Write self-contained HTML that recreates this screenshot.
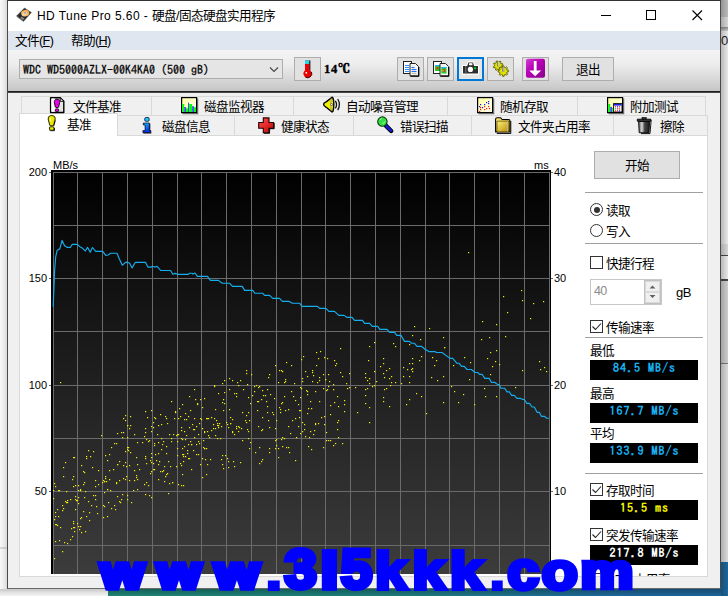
<!DOCTYPE html>
<html><head><meta charset="utf-8"><title>HD Tune Pro</title>
<style>
html,body{margin:0;padding:0}
body{width:728px;height:596px;overflow:hidden;position:relative;background:#f2f2f2;font-family:"Liberation Sans","Noto Sans CJK SC",sans-serif;font-size:12px;color:#000}
.a{position:absolute}
.t{position:absolute;white-space:nowrap;line-height:16px;height:16px;font-size:12.6px;letter-spacing:-0.6px}
.tab{position:absolute;box-sizing:border-box;border:1px solid #d9d9d9;background:#f0f0f0}
.btn{position:absolute;box-sizing:border-box;border:1px solid #adadad;background:#e1e1e1}
.sep{position:absolute;left:585px;width:118px;height:1px;background:#a0a0a0}
.cb{position:absolute;left:590px;width:13px;height:13px;box-sizing:border-box;border:1px solid #333;background:#fff}
.bx{position:absolute;left:590px;width:108px;height:20px;background:#000;font-family:IPAGothic,"Liberation Mono",monospace;font-weight:bold;font-size:12px;text-align:center;line-height:15px;letter-spacing:1px;text-indent:1px;white-space:nowrap}
.ax{position:absolute;font-size:11px;line-height:12px;height:12px;white-space:nowrap;color:#000}
</style></head><body>

<!-- surroundings -->
<div class="a" style="left:0;top:0;width:8px;height:596px;background:linear-gradient(90deg,#f8f8f8,#ececec 45%,#d4d4d4)"></div>
<div class="a" style="left:0;top:547px;width:8px;height:2px;background:linear-gradient(90deg,#d8d8d8,#c4c4c4)"></div>
<div class="a" style="left:721px;top:0;width:7px;height:17px;background:#c4c4c4"></div>
<div class="a" style="left:721px;top:17px;width:7px;height:10px;background:#e0e0e0"></div>
<div class="a" style="left:721px;top:27px;width:7px;height:4px;background:linear-gradient(#909090,#d8d8d8)"></div>
<div class="a" style="left:721px;top:31px;width:7px;height:213px;background:#f4f4f4"></div>
<div class="a" style="left:721px;top:244px;width:7px;height:11px;background:#e2e2e2"></div>
<div class="a" style="left:721px;top:255px;width:7px;height:1px;background:#4a4a4a"></div>
<div class="a" style="left:721px;top:256px;width:7px;height:23px;background:#f4f4f4"></div>
<div class="a" style="left:721px;top:279px;width:7px;height:2px;background:#4a4a4a"></div>
<div class="a" style="left:721px;top:281px;width:7px;height:82px;background:#d8d8d8"></div>
<div class="a" style="left:721px;top:363px;width:7px;height:1px;background:#808080"></div>
<div class="a" style="left:721px;top:364px;width:7px;height:198px;background:#e6e6e6"></div>
<div class="a" style="left:721px;top:33px;width:7px;height:16px;overflow:hidden;font-size:13px;line-height:16px;color:#222;white-space:nowrap">07</div>
<div class="a" style="left:721px;top:562px;width:7px;height:34px;background:#1e6aa0"></div>
<div class="a" style="left:721px;top:0;width:7px;height:596px;background:linear-gradient(90deg,rgba(0,0,0,.24),rgba(0,0,0,.05))"></div>
<div class="a" style="left:0;top:589px;width:108px;height:7px;background:linear-gradient(#c8c8c8,#e6e6e6 60%,#f2f2f2)"></div>
<div class="a" style="left:108px;top:589px;width:613px;height:7px;background:linear-gradient(90deg,#1f8a78,#1e8280 45%,#1e6aa0 85%)"></div>
<div class="a" style="left:108px;top:589px;width:613px;height:7px;background:linear-gradient(rgba(0,0,0,.3),rgba(0,0,0,.04))"></div>
<div class="a" style="left:108px;top:588px;width:620px;height:2px;background:linear-gradient(90deg,#f4f4f4 0,#f4f4f4 0%,#1c5f95 100%);display:none"></div>

<!-- window -->
<div class="a" style="left:7px;top:0;width:714px;height:589px;background:#f0f0f0;box-sizing:border-box;border:1px solid #4a4a4a;border-top-color:#333;border-bottom-color:#6a6a6a"></div>
<!-- title bar -->
<div class="a" style="left:8px;top:1px;width:712px;height:30px;background:#fff"></div>
<svg class="a" style="left:14px;top:5px" width="22" height="20" viewBox="14 5 22 20">
 <polygon points="24.5,8 31.4,12.6 23.6,21.2 16.6,16" fill="#2a2a2c" stroke="#555" stroke-width="0.6"/>
 <polygon points="16.6,16 23.6,21.2 23.6,22 16.6,16.8" fill="#777"/>
 <defs><radialGradient id="dg" cx=".35" cy=".6" r=".7"><stop offset="0" stop-color="#fde0a8"/><stop offset="1" stop-color="#eda040"/></radialGradient></defs><ellipse cx="25.2" cy="13.2" rx="4.1" ry="3.2" fill="url(#dg)" transform="rotate(-15 25.2 13.2)"/>
 <ellipse cx="25" cy="12.8" rx="1.3" ry="1.1" fill="#a8b0c0"/>
 <polygon points="21.5,16.5 24.5,18.5 23,20 20.3,18" fill="#8a8a8a"/>
</svg>
<div class="t" style="left:37px;top:8px" id="title"><span id="tl" style="font-size:12px;letter-spacing:0.44px">HD Tune Pro 5.60 - </span><span id="tc">硬盘/固态硬盘实用程序</span></div>
<svg class="a" style="left:595px;top:5px" width="115" height="22" viewBox="595 5 115 22" fill="none" stroke="#000" stroke-width="1">
 <line x1="601" y1="15.5" x2="611" y2="15.5"/>
 <rect x="646.5" y="10.5" width="9" height="9"/>
 <path d="M692.5 10.5l9.5 9.5M702 10.5l-9.5 9.5" stroke-width="1.1"/>
</svg>
<!-- menu bar -->
<div class="a" style="left:8px;top:31px;width:712px;height:19px;background:#dfe6f0"></div>
<div class="t" style="left:15px;top:33px" id="m1">文件(<u>F</u>)</div>
<div class="t" style="left:71px;top:33px" id="m2">帮助(<u>H</u>)</div>
<!-- toolbar -->
<div class="a" style="left:8px;top:50px;width:712px;height:41px;background:linear-gradient(#f4f4f4,#ededed 35%,#c6c6c6)"></div>
<div class="a" style="left:8px;top:91px;width:712px;height:2px;background:linear-gradient(#1e1e1e,#1e1e1e 60%,#8a8a8a)"></div>
<div class="btn" style="left:19px;top:59px;width:264px;height:20px;background:#e5e5e5"></div>
<div class="t" style="left:23px;top:61px;font-family:IPAGothic,'Liberation Mono',monospace;font-size:12px;letter-spacing:0;-webkit-text-stroke:0.25px #000" id="combo">WDC WD5000AZLX-00K4KA0 (500 gB)</div>
<svg class="a" style="left:268px;top:65px" width="12" height="9" viewBox="268 65 12 9"><path d="M270 67.5l4 4 4-4" fill="none" stroke="#444" stroke-width="1.1"/></svg>
<div class="btn" style="left:294px;top:57px;width:27px;height:24px"></div>
<svg class="a" style="left:300px;top:59px" width="16" height="20" viewBox="300 59 16 20">
 <rect x="305" y="60.3" width="4.6" height="12" fill="#f00000"/>
 <rect x="305" y="60.3" width="4.6" height="3.6" fill="#20e0f0"/>
 <rect x="309.2" y="60.5" width="1.2" height="10" fill="#222"/>
 <circle cx="307.6" cy="73.6" r="4.2" fill="#e80000"/>
 <path d="M311.5 72a4.2 4.2 0 0 1-6 5.2" fill="none" stroke="#400" stroke-width="1"/>
 <rect x="305.5" y="72" width="1.6" height="1.6" fill="#fff"/>
</svg>
<div class="t" style="left:324px;top:61px;font-family:'Liberation Serif','Noto Serif CJK SC',serif;font-weight:bold;font-size:12.5px;letter-spacing:0.7px;-webkit-text-stroke:0.35px #000" id="temp">14<span style="letter-spacing:0;-webkit-text-stroke:0.7px #000;font-size:12px">℃</span></div>

<div class="btn" style="left:397px;top:57px;width:27px;height:24px"></div>
<svg class="a" style="left:400px;top:59px" width="22" height="20" viewBox="400 59 22 20">
 <rect x="403.5" y="61.5" width="8" height="12" fill="#fff" stroke="#222"/>
 <g stroke="#1e90ff" stroke-width="1"><line x1="405" y1="65.5" x2="409" y2="65.5"/><line x1="405" y1="67.5" x2="409" y2="67.5"/><line x1="405" y1="69.5" x2="409" y2="69.5"/><line x1="405" y1="71.5" x2="409" y2="71.5"/></g>
 <path d="M410 63.5h5.5l3 3v9.3h-8.5z" fill="#f4f4f4" stroke="#222"/>
 <path d="M418.9 67v9.3h-8.5" fill="none" stroke="#000" stroke-width="1"/>
 <g stroke="#1e70ff" stroke-width="1.1"><line x1="411.5" y1="67.5" x2="414.5" y2="67.5"/><line x1="411.5" y1="69.5" x2="416.5" y2="69.5"/><line x1="411.5" y1="71.5" x2="416.5" y2="71.5"/><line x1="411.5" y1="73.5" x2="416.5" y2="73.5" stroke="#c8b8a0"/></g>
</svg>
<div class="btn" style="left:427px;top:57px;width:27px;height:24px"></div>
<svg class="a" style="left:430px;top:59px" width="22" height="20" viewBox="430 59 22 20">
 <rect x="433.5" y="61.5" width="8" height="12" fill="#fff" stroke="#222"/>
 <rect x="435" y="65" width="5" height="6" fill="#20d020"/><rect x="435" y="65" width="5" height="1.2" fill="#20b0ff"/><rect x="436.5" y="67" width="2" height="2.5" fill="#f03010"/>
 <path d="M440 63.5h5.5l3 3v9.3h-8.5z" fill="#f4f4f4" stroke="#222"/>
 <path d="M448.9 67v9.3h-8.5" fill="none" stroke="#000" stroke-width="1"/>
 <rect x="441.3" y="67" width="5.2" height="6.5" fill="#20d020"/><rect x="441.3" y="67" width="5.2" height="1.2" fill="#20b0ff"/><rect x="443" y="69" width="2" height="3" fill="#f03010"/><rect x="442.5" y="70" width="1.2" height="1.2" fill="#f0e000"/>
</svg>
<div class="btn" style="left:457px;top:57px;width:27px;height:24px;border:2px solid #0078d7;background:#e5e5e5"></div>
<svg class="a" style="left:460px;top:59px" width="22" height="20" viewBox="460 59 22 20">
 <path d="M463 66h4.2l1.2-3.6h4.6l1.2 3.6h3.8v7.6h-15z" fill="#fff" stroke="#fff" stroke-width="2.2" stroke-linejoin="round"/>
 <path d="M463 66h4.2l1.2-3.6h4.6l1.2 3.6h3.8v7.6h-15z" fill="#2e2e2e"/>
 <rect x="465" y="66" width="1.3" height="7.6" fill="#666"/>
 <rect x="469" y="63.2" width="3.4" height="2" fill="#fff"/>
 <circle cx="470.4" cy="69.4" r="2.6" fill="#fff"/>
 <rect x="474.2" y="67.3" width="1.9" height="1.9" fill="#00e020"/>
</svg>
<div class="btn" style="left:487px;top:57px;width:27px;height:24px"></div>
<svg class="a" style="left:490px;top:59px" width="22" height="20" viewBox="490 59 22 20">
 <g fill="#e2e200" stroke="#5a5a00" stroke-width="0.9" stroke-linejoin="round">
 <path d="M501.63 66.40L502.82 67.34L502.26 68.44L500.80 68.04L500.13 68.62L500.30 70.12L499.14 70.51L498.38 69.20L497.50 69.13L496.56 70.32L495.46 69.76L495.86 68.30L495.28 67.63L493.78 67.80L493.39 66.64L494.70 65.88L494.77 65.00L493.58 64.06L494.14 62.96L495.60 63.36L496.27 62.78L496.10 61.28L497.26 60.89L498.02 62.20L498.90 62.27L499.84 61.08L500.94 61.64L500.54 63.10L501.12 63.77L502.62 63.60L503.01 64.76L501.70 65.52z"/>
 <path d="M506.63 72.92L507.55 74.27L506.62 75.23L505.24 74.37L504.37 74.75L504.06 76.35L502.73 76.37L502.36 74.78L501.48 74.43L500.13 75.35L499.17 74.42L500.03 73.04L499.65 72.17L498.05 71.86L498.03 70.53L499.62 70.16L499.97 69.28L499.05 67.93L499.98 66.97L501.36 67.83L502.23 67.45L502.54 65.85L503.87 65.83L504.24 67.42L505.12 67.77L506.47 66.85L507.43 67.78L506.57 69.16L506.95 70.03L508.55 70.34L508.57 71.67L506.98 72.04z"/>
 </g>
 <rect x="497.300" y="61.800" width="1.800" height="4.600" fill="#667"/><rect x="498.200" y="61.800" width=".9" height="4.600" fill="#dde"/>
 <rect x="502.400" y="67" width="1.900" height="4.800" fill="#667"/><rect x="503.400" y="67" width=".9" height="4.800" fill="#dde"/>
</svg>
<div class="btn" style="left:522px;top:57px;width:27px;height:24px"></div>
<svg class="a" style="left:525px;top:58px" width="22" height="22" viewBox="525 58 22 22">
 <defs><linearGradient id="mg" x1="0" y1="0" x2="1" y2="1"><stop offset="0" stop-color="#d040d0"/><stop offset=".4" stop-color="#b800b8"/><stop offset="1" stop-color="#8a008a"/></linearGradient></defs>
 <rect x="526" y="58.8" width="19" height="19" rx="2" fill="url(#mg)"/>
 <path d="M533.8 61h2.8v9.4h4.6l-6 5.8-6-5.8h4.6z" fill="#fff"/>
</svg>
<div class="btn" style="left:562px;top:57px;width:52px;height:24px"></div>
<div class="t" style="left:576px;top:62px" id="exit">退出</div>

<!-- tabs row 1 -->
<div class="tab" style="left:21px;top:96px;width:131px;height:20px"></div>
<div class="tab" style="left:151px;top:96px;width:143px;height:20px"></div>
<div class="tab" style="left:293px;top:96px;width:155px;height:20px"></div>
<div class="tab" style="left:447px;top:96px;width:131px;height:20px"></div>
<div class="tab" style="left:577px;top:96px;width:129px;height:20px"></div>
<!-- tabs row 2 -->
<div class="tab" style="left:116px;top:115px;width:119px;height:21px"></div>
<div class="tab" style="left:234px;top:115px;width:120px;height:21px"></div>
<div class="tab" style="left:353px;top:115px;width:119px;height:21px"></div>
<div class="tab" style="left:471px;top:115px;width:143px;height:21px"></div>
<div class="tab" style="left:613px;top:115px;width:95px;height:21px"></div>
<!-- tab page -->
<div class="a" style="left:19px;top:135px;width:689px;height:442px;background:#fff;box-sizing:border-box;border:1px solid #d9d9d9"></div>
<div class="a" style="left:19px;top:113px;width:99px;height:23px;background:#fff;box-sizing:border-box;border:1px solid #d9d9d9;border-bottom:none"></div>

<div class="t" style="left:73px;top:99px" id="r1a">文件基准</div>
<div class="t" style="left:204px;top:99px" id="r1b">磁盘监视器</div>
<div class="t" style="left:346px;top:99px" id="r1c">自动噪音管理</div>
<div class="t" style="left:500px;top:99px" id="r1d">随机存取</div>
<div class="t" style="left:630px;top:99px" id="r1e">附加测试</div>
<div class="t" style="left:67px;top:117px" id="r2a">基准</div>
<div class="t" style="left:162px;top:119px" id="r2b">磁盘信息</div>
<div class="t" style="left:281px;top:119px" id="r2c">健康状态</div>
<div class="t" style="left:400px;top:119px" id="r2d">错误扫描</div>
<div class="t" style="left:518px;top:119px" id="r2e">文件夹占用率</div>
<div class="t" style="left:660px;top:119px" id="r2f">擦除</div>

<!-- tab icons -->
<svg class="a" style="left:40px;top:94px" width="680" height="42" viewBox="40 94 680 42">
 <defs>
  <linearGradient id="cr" x1="0" y1="0" x2="1" y2="1"><stop offset="0" stop-color="#ffffa0"/><stop offset="1" stop-color="#fffff4"/></linearGradient>
  <linearGradient id="fo" x1="0" y1="0" x2="1" y2="1"><stop offset="0" stop-color="#fff27a"/><stop offset="1" stop-color="#b88a00"/></linearGradient>
  <linearGradient id="tr" x1="0" y1="0" x2="1" y2="0"><stop offset="0" stop-color="#555"/><stop offset=".3" stop-color="#d8d8d8"/><stop offset=".55" stop-color="#444"/><stop offset="1" stop-color="#1a1a1a"/></linearGradient>
  <linearGradient id="bi" x1="0" y1="0" x2="0" y2="1"><stop offset="0" stop-color="#10a8ff"/><stop offset="1" stop-color="#0020f0"/></linearGradient>
  <linearGradient id="rc" x1="0" y1="0" x2="1" y2="1"><stop offset="0" stop-color="#ff5050"/><stop offset="1" stop-color="#c00000"/></linearGradient>
 </defs>
 <!-- file benchmark -->
 <path d="M50.6 97.700h9.600l3.600 3.600v11.200h-13.200z" fill="#e4e4e4" stroke="#000" stroke-width="1.400" stroke-linejoin="round"/>
 <rect x="51.400" y="98.500" width="3.200" height="13.200" fill="#fff"/>
 <path d="M60.200 97.700v3.600h3.600z" fill="#fff" stroke="#000" stroke-width=".9"/>
 <path d="M57 99.200c2.300 0 2.900 1.700 2.600 3.400l-1 4.400c-.3 1.100-2.900 1.100-3.200 0l-1-4.400c-.3-1.700.3-3.400 2.600-3.400z" fill="#e800e8" stroke="#1a001a" stroke-width="1"/>
 <rect x="55.300" y="109" width="3.400" height="2.500" rx="1" fill="#e800e8" stroke="#1a001a" stroke-width=".9"/>
 <!-- monitor -->
 <rect x="181.600" y="97.600" width="15" height="15" fill="url(#cr)" stroke="#000" stroke-width="1.200"/>
 <rect x="197.200" y="98.500" width="1" height="15" fill="#555"/><rect x="182.500" y="113.200" width="15.700" height="1" fill="#555"/>
 <g><rect x="182.200" y="104" width="2" height="8" fill="#0f0"/><rect x="184.200" y="107" width="1.900" height="5" fill="#4848ff"/><rect x="186.100" y="108.300" width="1.900" height="3.700" fill="#0f0"/><rect x="188" y="102.700" width="1.100" height="9.300" fill="#4848ff"/><rect x="189.100" y="104" width="3" height="8" fill="#0f0"/><rect x="192.100" y="106.200" width="1.900" height="5.800" fill="#4848ff"/><rect x="194" y="107.200" width="2" height="4.800" fill="#0f0"/></g>
 <!-- speaker -->
 <path d="M323.600 104.300c0-1.600 1.500-1.900 2.600-2.400l6-4.700c.8 0 1.600 3.500 1.600 7.400s-.8 7.400-1.600 7.400l-6-4.700c-1.100-.5-2.600-1.400-2.600-3z" fill="#f0f000" stroke="#000" stroke-width="1.400"/>
 <path d="M331 98.500v12" stroke="#888" stroke-width=".8"/>
 <circle cx="331.600" cy="104.500" r="1" fill="#fff" stroke="#333" stroke-width=".6"/>
 <path d="M335.400 100.800c1.300 2.200 1.300 5.400 0 7.600M337.700 99c2.200 3.200 2.200 8 0 11.200" fill="none" stroke="#111" stroke-width="1.300"/>
 <!-- random -->
 <rect x="477.600" y="97.600" width="15" height="15" fill="url(#cr)" stroke="#000" stroke-width="1.200"/>
 <rect x="493.200" y="98.500" width="1" height="15" fill="#555"/><rect x="478.500" y="113.200" width="15.700" height="1" fill="#555"/>
 <g fill="#1010ff"><rect x="480" y="104" width="1.200" height="1.200"/><rect x="479" y="106" width="1.200" height="1.200"/><rect x="482" y="107" width="1.200" height="1.200"/><rect x="484" y="104" width="1.200" height="1.200"/><rect x="486" y="102" width="1.200" height="1.200"/><rect x="488" y="101" width="1.200" height="1.200"/><rect x="488" y="103" width="1.200" height="1.200"/></g>
 <g fill="#ff1010"><rect x="479" y="111" width="1.200" height="1.200"/><rect x="480" y="109" width="1.200" height="1.200"/><rect x="480" y="107" width="1.200" height="1.200"/><rect x="484" y="109" width="1.200" height="1.200"/><rect x="484" y="106" width="1.200" height="1.200"/><rect x="486" y="108" width="1.200" height="1.200"/><rect x="488" y="106" width="1.200" height="1.200"/><rect x="489" y="108" width="1.200" height="1.200"/></g>
 <!-- extra -->
 <rect x="607.600" y="97.600" width="15" height="15" fill="url(#cr)" stroke="#000" stroke-width="1.200"/>
 <rect x="623.200" y="98.500" width="1" height="15" fill="#555"/><rect x="608.500" y="113.200" width="15.700" height="1" fill="#555"/>
 <rect x="608.200" y="104" width="2" height="8" fill="#0f0"/><rect x="610.200" y="107" width="2" height="5" fill="#4848ff"/><rect x="612.200" y="108" width="1" height="4" fill="#0f0"/>
 <rect x="613.600" y="103.600" width="8.400" height="8.400" fill="#fff" stroke="#000" stroke-width=".9"/>
 <rect x="614" y="104" width="7.600" height="1.600" fill="#2020e0"/>
 <g fill="#f00"><rect x="615" y="106.300" width="1.100" height="1.100"/><rect x="619" y="106.300" width="1.100" height="1.100"/><rect x="617" y="108.300" width="1.100" height="1.100"/><rect x="615" y="110.300" width="1.100" height="1.100"/><rect x="617" y="110.300" width="1.100" height="1.100"/></g>
 <g fill="#00f"><rect x="617" y="106.300" width="1.100" height="1.100"/><rect x="619" y="110.300" width="1.100" height="1.100"/></g><rect x="615" y="108.300" width="1.100" height="1.100" fill="#0c0"/><rect x="619" y="108.300" width="1.100" height="1.100" fill="#f00"/>
 <!-- benchmark (yellow !) -->
 <path d="M51.700 115.500c2.900 0 3.700 2 3.400 4.200l-1.400 5.200c-.4 1.300-3.600 1.300-4 0l-1.400-5.200c-.3-2.200.5-4.200 3.400-4.200z" fill="#e8e800" stroke="#3a3a00" stroke-width="1.100"/>
 <rect x="49.500" y="126.800" width="4.500" height="3.500" rx="1.300" fill="#e8e800" stroke="#3a3a00" stroke-width="1.100"/>
 <path d="M55.300 120.500l-1.500 5.300M54.500 128v2.700h-4" stroke="#111" stroke-width=".9" fill="none"/>
 <path d="M50.300 117.500v4" stroke="#ffffa0" stroke-width="1"/>
 <!-- info -->
 <rect x="144.700" y="117.500" width="4.500" height="3.800" rx="1.200" fill="#20c0ff" stroke="#002" stroke-width=".7"/>
 <path d="M143.300 123h6v7.600h1.600v2h-8v-2h2.200v-5.600h-1.800z" fill="url(#bi)" stroke="#001" stroke-width=".7"/>
 <path d="M149.800 123.500v7M143.300 133h8" stroke="#000" stroke-width=".9"/>
 <!-- health -->
 <path d="M263.300 117.900h5.700v4.600h4.600v5.700h-4.600v4.600h-5.700v-4.600h-4.600v-5.700h4.600z" fill="url(#rc)" stroke="#200" stroke-width="1.100"/>
 <path d="M269.600 133.300h-5.700M274.200 123v5.700h-4.600v4.600" fill="none" stroke="#000" stroke-width=".9"/>
 <!-- magnifier -->
 <path d="M385.600 125.400l5.600 5.600" stroke="#000" stroke-width="4.400" stroke-linecap="round"/>
 <path d="M385.400 125l5.400 5.400" stroke="#1818d0" stroke-width="2.800" stroke-linecap="round"/>
 <circle cx="382.400" cy="121.600" r="4.700" fill="#38e048" stroke="#0a3a0a" stroke-width="1.100"/>
 <path d="M380 119.600l1.600-1.400M382.600 124l2.400-2.400" stroke="#c8ffc8" stroke-width=".9"/>
 <!-- folder -->
 <path d="M495.600 119.300c0-1 .6-1.600 1.600-1.600h3.400l1.600 1.800h6.400c1 0 1.400.6 1.400 1.400v11h-14.400z" fill="url(#fo)" stroke="#000" stroke-width="1.100"/>
 <path d="M497 121.200h12v10.700h-12z" fill="url(#fo)" stroke="#3a2a00" stroke-width=".6"/>
 <rect x="507.200" y="121.500" width=".8" height="10" fill="#bbb"/>
 <path d="M510.800 121v12.500h-14" stroke="#000" stroke-width=".9" fill="none"/>
 <!-- trash -->
 <path d="M638.600 121.500h11l-.6 11.200h-9.800z" fill="url(#tr)" stroke="#000" stroke-width=".9"/>
 <path d="M637.300 119.200h13.600v2h-13.600z" fill="#444" stroke="#000" stroke-width=".9"/>
 <rect x="642" y="117.500" width="4.200" height="1.600" fill="#333" stroke="#000" stroke-width=".6"/>
 <path d="M651 120v2l-1 11.600h-9" stroke="#000" stroke-width=".9" fill="none"/>
</svg>

<!-- chart -->
<svg class="a" style="left:20px;top:136px" width="560" height="438" viewBox="20 136 560 438">
 <defs><linearGradient id="cg" x1="0" y1="0" x2="0" y2="1"><stop offset="0" stop-color="#000"/><stop offset="1" stop-color="#404040"/></linearGradient></defs>
 <rect x="51" y="170" width="500" height="430" fill="url(#cg)"/>
 <rect x="51" y="170" width="2" height="430" fill="#000"/><rect x="550" y="170" width="1" height="430" fill="#000"/><rect x="51" y="170" width="500" height="2" fill="#000"/>
 <g fill="#6b6b6b" shape-rendering="crispEdges"><rect x="53" y="172" width="1" height="404"/><rect x="77" y="172" width="1" height="404"/><rect x="102" y="172" width="1" height="404"/><rect x="127" y="172" width="1" height="404"/><rect x="152" y="172" width="1" height="404"/><rect x="177" y="172" width="1" height="404"/><rect x="201" y="172" width="1" height="404"/><rect x="226" y="172" width="1" height="404"/><rect x="251" y="172" width="1" height="404"/><rect x="276" y="172" width="1" height="404"/><rect x="301" y="172" width="1" height="404"/><rect x="325" y="172" width="1" height="404"/><rect x="350" y="172" width="1" height="404"/><rect x="375" y="172" width="1" height="404"/><rect x="400" y="172" width="1" height="404"/><rect x="425" y="172" width="1" height="404"/><rect x="449" y="172" width="1" height="404"/><rect x="474" y="172" width="1" height="404"/><rect x="499" y="172" width="1" height="404"/><rect x="524" y="172" width="1" height="404"/><rect x="549" y="172" width="1" height="404"/><rect x="53" y="172" width="497" height="1"/><rect x="53" y="225" width="497" height="1"/><rect x="53" y="278" width="497" height="1"/><rect x="53" y="331" width="497" height="1"/><rect x="53" y="385" width="497" height="1"/><rect x="53" y="438" width="497" height="1"/><rect x="53" y="491" width="497" height="1"/><rect x="53" y="545" width="497" height="1"/></g>
 <g fill="#666"><rect x="49" y="172" width="2" height="1"/><rect x="49" y="278" width="2" height="1"/><rect x="49" y="385" width="2" height="1"/><rect x="49" y="491" width="2" height="1"/><rect x="551" y="172" width="2" height="1"/><rect x="551" y="278" width="2" height="1"/><rect x="551" y="385" width="2" height="1"/><rect x="551" y="491" width="2" height="1"/></g>
 <g fill="#f6ee00"><rect x="214" y="385" width="1.2" height="1.2"/><rect x="319" y="377" width="1.2" height="1.2"/><rect x="269" y="427" width="1.2" height="1.2"/><rect x="115" y="509" width="1.2" height="1.2"/><rect x="340" y="348" width="1.2" height="1.2"/><rect x="125" y="462" width="1.2" height="1.2"/><rect x="238" y="385" width="1.2" height="1.2"/><rect x="391" y="382" width="1.2" height="1.2"/><rect x="202" y="407" width="1.2" height="1.2"/><rect x="338" y="420" width="1.2" height="1.2"/><rect x="196" y="444" width="1.2" height="1.2"/><rect x="129" y="480" width="1.2" height="1.2"/><rect x="209" y="437" width="1.2" height="1.2"/><rect x="280" y="409" width="1.2" height="1.2"/><rect x="383" y="397" width="1.2" height="1.2"/><rect x="194" y="389" width="1.2" height="1.2"/><rect x="282" y="402" width="1.2" height="1.2"/><rect x="117" y="464" width="1.2" height="1.2"/><rect x="276" y="445" width="1.2" height="1.2"/><rect x="259" y="463" width="1.2" height="1.2"/><rect x="128" y="447" width="1.2" height="1.2"/><rect x="346" y="383" width="1.2" height="1.2"/><rect x="80" y="526" width="1.2" height="1.2"/><rect x="251" y="374" width="1.2" height="1.2"/><rect x="86" y="458" width="1.2" height="1.2"/><rect x="53" y="490" width="1.2" height="1.2"/><rect x="127" y="437" width="1.2" height="1.2"/><rect x="285" y="381" width="1.2" height="1.2"/><rect x="185" y="439" width="1.2" height="1.2"/><rect x="316" y="352" width="1.2" height="1.2"/><rect x="315" y="423" width="1.2" height="1.2"/><rect x="183" y="456" width="1.2" height="1.2"/><rect x="164" y="481" width="1.2" height="1.2"/><rect x="421" y="356" width="1.2" height="1.2"/><rect x="67" y="502" width="1.2" height="1.2"/><rect x="163" y="441" width="1.2" height="1.2"/><rect x="291" y="365" width="1.2" height="1.2"/><rect x="291" y="391" width="1.2" height="1.2"/><rect x="250" y="442" width="1.2" height="1.2"/><rect x="137" y="489" width="1.2" height="1.2"/><rect x="126" y="476" width="1.2" height="1.2"/><rect x="227" y="424" width="1.2" height="1.2"/><rect x="158" y="442" width="1.2" height="1.2"/><rect x="182" y="454" width="1.2" height="1.2"/><rect x="281" y="403" width="1.2" height="1.2"/><rect x="317" y="382" width="1.2" height="1.2"/><rect x="55" y="524" width="1.2" height="1.2"/><rect x="330" y="405" width="1.2" height="1.2"/><rect x="443" y="337" width="1.2" height="1.2"/><rect x="191" y="444" width="1.2" height="1.2"/><rect x="273" y="414" width="1.2" height="1.2"/><rect x="318" y="423" width="1.2" height="1.2"/><rect x="182" y="474" width="1.2" height="1.2"/><rect x="121" y="432" width="1.2" height="1.2"/><rect x="89" y="520" width="1.2" height="1.2"/><rect x="130" y="425" width="1.2" height="1.2"/><rect x="162" y="471" width="1.2" height="1.2"/><rect x="267" y="389" width="1.2" height="1.2"/><rect x="412" y="368" width="1.2" height="1.2"/><rect x="62" y="510" width="1.2" height="1.2"/><rect x="85" y="531" width="1.2" height="1.2"/><rect x="105" y="476" width="1.2" height="1.2"/><rect x="117" y="496" width="1.2" height="1.2"/><rect x="182" y="448" width="1.2" height="1.2"/><rect x="401" y="383" width="1.2" height="1.2"/><rect x="89" y="512" width="1.2" height="1.2"/><rect x="95" y="495" width="1.2" height="1.2"/><rect x="222" y="402" width="1.2" height="1.2"/><rect x="117" y="433" width="1.2" height="1.2"/><rect x="78" y="497" width="1.2" height="1.2"/><rect x="197" y="404" width="1.2" height="1.2"/><rect x="177" y="448" width="1.2" height="1.2"/><rect x="147" y="417" width="1.2" height="1.2"/><rect x="299" y="417" width="1.2" height="1.2"/><rect x="369" y="346" width="1.2" height="1.2"/><rect x="88" y="450" width="1.2" height="1.2"/><rect x="386" y="370" width="1.2" height="1.2"/><rect x="131" y="502" width="1.2" height="1.2"/><rect x="325" y="379" width="1.2" height="1.2"/><rect x="230" y="423" width="1.2" height="1.2"/><rect x="153" y="422" width="1.2" height="1.2"/><rect x="252" y="395" width="1.2" height="1.2"/><rect x="344" y="411" width="1.2" height="1.2"/><rect x="247" y="384" width="1.2" height="1.2"/><rect x="75" y="509" width="1.2" height="1.2"/><rect x="122" y="494" width="1.2" height="1.2"/><rect x="167" y="423" width="1.2" height="1.2"/><rect x="55" y="516" width="1.2" height="1.2"/><rect x="319" y="401" width="1.2" height="1.2"/><rect x="90" y="456" width="1.2" height="1.2"/><rect x="298" y="426" width="1.2" height="1.2"/><rect x="372" y="386" width="1.2" height="1.2"/><rect x="204" y="398" width="1.2" height="1.2"/><rect x="389" y="378" width="1.2" height="1.2"/><rect x="285" y="379" width="1.2" height="1.2"/><rect x="62" y="551" width="1.2" height="1.2"/><rect x="276" y="420" width="1.2" height="1.2"/><rect x="342" y="443" width="1.2" height="1.2"/><rect x="119" y="501" width="1.2" height="1.2"/><rect x="403" y="376" width="1.2" height="1.2"/><rect x="65" y="501" width="1.2" height="1.2"/><rect x="203" y="440" width="1.2" height="1.2"/><rect x="54" y="483" width="1.2" height="1.2"/><rect x="238" y="431" width="1.2" height="1.2"/><rect x="232" y="380" width="1.2" height="1.2"/><rect x="185" y="456" width="1.2" height="1.2"/><rect x="411" y="369" width="1.2" height="1.2"/><rect x="195" y="399" width="1.2" height="1.2"/><rect x="288" y="447" width="1.2" height="1.2"/><rect x="182" y="439" width="1.2" height="1.2"/><rect x="136" y="475" width="1.2" height="1.2"/><rect x="162" y="444" width="1.2" height="1.2"/><rect x="122" y="437" width="1.2" height="1.2"/><rect x="172" y="482" width="1.2" height="1.2"/><rect x="259" y="386" width="1.2" height="1.2"/><rect x="191" y="444" width="1.2" height="1.2"/><rect x="188" y="458" width="1.2" height="1.2"/><rect x="64" y="542" width="1.2" height="1.2"/><rect x="288" y="426" width="1.2" height="1.2"/><rect x="107" y="489" width="1.2" height="1.2"/><rect x="280" y="412" width="1.2" height="1.2"/><rect x="204" y="448" width="1.2" height="1.2"/><rect x="109" y="479" width="1.2" height="1.2"/><rect x="246" y="370" width="1.2" height="1.2"/><rect x="203" y="447" width="1.2" height="1.2"/><rect x="170" y="466" width="1.2" height="1.2"/><rect x="206" y="448" width="1.2" height="1.2"/><rect x="262" y="459" width="1.2" height="1.2"/><rect x="166" y="453" width="1.2" height="1.2"/><rect x="151" y="453" width="1.2" height="1.2"/><rect x="155" y="454" width="1.2" height="1.2"/><rect x="163" y="470" width="1.2" height="1.2"/><rect x="146" y="482" width="1.2" height="1.2"/><rect x="126" y="466" width="1.2" height="1.2"/><rect x="79" y="529" width="1.2" height="1.2"/><rect x="145" y="411" width="1.2" height="1.2"/><rect x="383" y="358" width="1.2" height="1.2"/><rect x="54" y="519" width="1.2" height="1.2"/><rect x="230" y="417" width="1.2" height="1.2"/><rect x="77" y="500" width="1.2" height="1.2"/><rect x="234" y="434" width="1.2" height="1.2"/><rect x="434" y="365" width="1.2" height="1.2"/><rect x="181" y="427" width="1.2" height="1.2"/><rect x="188" y="416" width="1.2" height="1.2"/><rect x="409" y="363" width="1.2" height="1.2"/><rect x="522" y="370" width="1.2" height="1.2"/><rect x="178" y="484" width="1.2" height="1.2"/><rect x="144" y="484" width="1.2" height="1.2"/><rect x="216" y="420" width="1.2" height="1.2"/><rect x="151" y="410" width="1.2" height="1.2"/><rect x="328" y="440" width="1.2" height="1.2"/><rect x="95" y="499" width="1.2" height="1.2"/><rect x="275" y="428" width="1.2" height="1.2"/><rect x="383" y="363" width="1.2" height="1.2"/><rect x="335" y="365" width="1.2" height="1.2"/><rect x="176" y="466" width="1.2" height="1.2"/><rect x="215" y="428" width="1.2" height="1.2"/><rect x="168" y="493" width="1.2" height="1.2"/><rect x="104" y="506" width="1.2" height="1.2"/><rect x="507" y="312" width="1.2" height="1.2"/><rect x="182" y="404" width="1.2" height="1.2"/><rect x="161" y="424" width="1.2" height="1.2"/><rect x="154" y="445" width="1.2" height="1.2"/><rect x="208" y="435" width="1.2" height="1.2"/><rect x="84" y="497" width="1.2" height="1.2"/><rect x="98" y="470" width="1.2" height="1.2"/><rect x="194" y="418" width="1.2" height="1.2"/><rect x="335" y="443" width="1.2" height="1.2"/><rect x="234" y="393" width="1.2" height="1.2"/><rect x="56" y="524" width="1.2" height="1.2"/><rect x="134" y="470" width="1.2" height="1.2"/><rect x="505" y="336" width="1.2" height="1.2"/><rect x="304" y="429" width="1.2" height="1.2"/><rect x="107" y="516" width="1.2" height="1.2"/><rect x="151" y="497" width="1.2" height="1.2"/><rect x="293" y="396" width="1.2" height="1.2"/><rect x="254" y="386" width="1.2" height="1.2"/><rect x="161" y="438" width="1.2" height="1.2"/><rect x="114" y="505" width="1.2" height="1.2"/><rect x="73" y="457" width="1.2" height="1.2"/><rect x="470" y="362" width="1.2" height="1.2"/><rect x="365" y="389" width="1.2" height="1.2"/><rect x="380" y="366" width="1.2" height="1.2"/><rect x="296" y="437" width="1.2" height="1.2"/><rect x="281" y="370" width="1.2" height="1.2"/><rect x="117" y="464" width="1.2" height="1.2"/><rect x="73" y="521" width="1.2" height="1.2"/><rect x="307" y="391" width="1.2" height="1.2"/><rect x="149" y="495" width="1.2" height="1.2"/><rect x="86" y="456" width="1.2" height="1.2"/><rect x="458" y="402" width="1.2" height="1.2"/><rect x="157" y="434" width="1.2" height="1.2"/><rect x="71" y="528" width="1.2" height="1.2"/><rect x="443" y="376" width="1.2" height="1.2"/><rect x="232" y="431" width="1.2" height="1.2"/><rect x="492" y="366" width="1.2" height="1.2"/><rect x="249" y="448" width="1.2" height="1.2"/><rect x="232" y="419" width="1.2" height="1.2"/><rect x="77" y="523" width="1.2" height="1.2"/><rect x="208" y="418" width="1.2" height="1.2"/><rect x="268" y="377" width="1.2" height="1.2"/><rect x="166" y="418" width="1.2" height="1.2"/><rect x="106" y="481" width="1.2" height="1.2"/><rect x="154" y="417" width="1.2" height="1.2"/><rect x="127" y="495" width="1.2" height="1.2"/><rect x="184" y="446" width="1.2" height="1.2"/><rect x="227" y="458" width="1.2" height="1.2"/><rect x="177" y="441" width="1.2" height="1.2"/><rect x="171" y="401" width="1.2" height="1.2"/><rect x="327" y="389" width="1.2" height="1.2"/><rect x="305" y="371" width="1.2" height="1.2"/><rect x="207" y="464" width="1.2" height="1.2"/><rect x="409" y="399" width="1.2" height="1.2"/><rect x="284" y="382" width="1.2" height="1.2"/><rect x="105" y="478" width="1.2" height="1.2"/><rect x="407" y="369" width="1.2" height="1.2"/><rect x="185" y="413" width="1.2" height="1.2"/><rect x="490" y="352" width="1.2" height="1.2"/><rect x="215" y="435" width="1.2" height="1.2"/><rect x="286" y="447" width="1.2" height="1.2"/><rect x="270" y="394" width="1.2" height="1.2"/><rect x="158" y="453" width="1.2" height="1.2"/><rect x="66" y="491" width="1.2" height="1.2"/><rect x="123" y="478" width="1.2" height="1.2"/><rect x="86" y="516" width="1.2" height="1.2"/><rect x="496" y="396" width="1.2" height="1.2"/><rect x="522" y="300" width="1.2" height="1.2"/><rect x="367" y="380" width="1.2" height="1.2"/><rect x="155" y="418" width="1.2" height="1.2"/><rect x="193" y="450" width="1.2" height="1.2"/><rect x="303" y="356" width="1.2" height="1.2"/><rect x="258" y="401" width="1.2" height="1.2"/><rect x="161" y="449" width="1.2" height="1.2"/><rect x="54" y="558" width="1.2" height="1.2"/><rect x="55" y="541" width="1.2" height="1.2"/><rect x="145" y="458" width="1.2" height="1.2"/><rect x="160" y="414" width="1.2" height="1.2"/><rect x="369" y="407" width="1.2" height="1.2"/><rect x="230" y="423" width="1.2" height="1.2"/><rect x="495" y="361" width="1.2" height="1.2"/><rect x="302" y="378" width="1.2" height="1.2"/><rect x="282" y="437" width="1.2" height="1.2"/><rect x="374" y="385" width="1.2" height="1.2"/><rect x="137" y="464" width="1.2" height="1.2"/><rect x="116" y="443" width="1.2" height="1.2"/><rect x="148" y="485" width="1.2" height="1.2"/><rect x="130" y="452" width="1.2" height="1.2"/><rect x="133" y="490" width="1.2" height="1.2"/><rect x="104" y="492" width="1.2" height="1.2"/><rect x="269" y="374" width="1.2" height="1.2"/><rect x="156" y="460" width="1.2" height="1.2"/><rect x="367" y="388" width="1.2" height="1.2"/><rect x="267" y="406" width="1.2" height="1.2"/><rect x="167" y="473" width="1.2" height="1.2"/><rect x="279" y="370" width="1.2" height="1.2"/><rect x="262" y="429" width="1.2" height="1.2"/><rect x="177" y="455" width="1.2" height="1.2"/><rect x="256" y="385" width="1.2" height="1.2"/><rect x="246" y="373" width="1.2" height="1.2"/><rect x="323" y="447" width="1.2" height="1.2"/><rect x="311" y="408" width="1.2" height="1.2"/><rect x="312" y="372" width="1.2" height="1.2"/><rect x="393" y="343" width="1.2" height="1.2"/><rect x="81" y="465" width="1.2" height="1.2"/><rect x="262" y="390" width="1.2" height="1.2"/><rect x="315" y="391" width="1.2" height="1.2"/><rect x="158" y="479" width="1.2" height="1.2"/><rect x="368" y="360" width="1.2" height="1.2"/><rect x="199" y="443" width="1.2" height="1.2"/><rect x="240" y="380" width="1.2" height="1.2"/><rect x="412" y="363" width="1.2" height="1.2"/><rect x="266" y="401" width="1.2" height="1.2"/><rect x="81" y="517" width="1.2" height="1.2"/><rect x="123" y="418" width="1.2" height="1.2"/><rect x="59" y="490" width="1.2" height="1.2"/><rect x="103" y="480" width="1.2" height="1.2"/><rect x="129" y="428" width="1.2" height="1.2"/><rect x="184" y="419" width="1.2" height="1.2"/><rect x="285" y="410" width="1.2" height="1.2"/><rect x="321" y="417" width="1.2" height="1.2"/><rect x="333" y="384" width="1.2" height="1.2"/><rect x="261" y="430" width="1.2" height="1.2"/><rect x="67" y="543" width="1.2" height="1.2"/><rect x="217" y="425" width="1.2" height="1.2"/><rect x="499" y="364" width="1.2" height="1.2"/><rect x="221" y="426" width="1.2" height="1.2"/><rect x="269" y="448" width="1.2" height="1.2"/><rect x="199" y="423" width="1.2" height="1.2"/><rect x="305" y="436" width="1.2" height="1.2"/><rect x="217" y="438" width="1.2" height="1.2"/><rect x="443" y="402" width="1.2" height="1.2"/><rect x="324" y="357" width="1.2" height="1.2"/><rect x="391" y="376" width="1.2" height="1.2"/><rect x="432" y="357" width="1.2" height="1.2"/><rect x="236" y="428" width="1.2" height="1.2"/><rect x="181" y="430" width="1.2" height="1.2"/><rect x="80" y="489" width="1.2" height="1.2"/><rect x="275" y="440" width="1.2" height="1.2"/><rect x="258" y="387" width="1.2" height="1.2"/><rect x="128" y="450" width="1.2" height="1.2"/><rect x="533" y="303" width="1.2" height="1.2"/><rect x="62" y="505" width="1.2" height="1.2"/><rect x="78" y="526" width="1.2" height="1.2"/><rect x="416" y="393" width="1.2" height="1.2"/><rect x="282" y="446" width="1.2" height="1.2"/><rect x="59" y="540" width="1.2" height="1.2"/><rect x="93" y="451" width="1.2" height="1.2"/><rect x="83" y="484" width="1.2" height="1.2"/><rect x="389" y="368" width="1.2" height="1.2"/><rect x="261" y="461" width="1.2" height="1.2"/><rect x="198" y="454" width="1.2" height="1.2"/><rect x="206" y="418" width="1.2" height="1.2"/><rect x="194" y="437" width="1.2" height="1.2"/><rect x="74" y="531" width="1.2" height="1.2"/><rect x="337" y="429" width="1.2" height="1.2"/><rect x="225" y="455" width="1.2" height="1.2"/><rect x="153" y="427" width="1.2" height="1.2"/><rect x="284" y="438" width="1.2" height="1.2"/><rect x="281" y="439" width="1.2" height="1.2"/><rect x="169" y="483" width="1.2" height="1.2"/><rect x="312" y="370" width="1.2" height="1.2"/><rect x="149" y="440" width="1.2" height="1.2"/><rect x="334" y="360" width="1.2" height="1.2"/><rect x="75" y="485" width="1.2" height="1.2"/><rect x="444" y="347" width="1.2" height="1.2"/><rect x="311" y="449" width="1.2" height="1.2"/><rect x="295" y="418" width="1.2" height="1.2"/><rect x="179" y="408" width="1.2" height="1.2"/><rect x="78" y="490" width="1.2" height="1.2"/><rect x="85" y="491" width="1.2" height="1.2"/><rect x="181" y="485" width="1.2" height="1.2"/><rect x="386" y="388" width="1.2" height="1.2"/><rect x="72" y="536" width="1.2" height="1.2"/><rect x="469" y="379" width="1.2" height="1.2"/><rect x="81" y="532" width="1.2" height="1.2"/><rect x="389" y="406" width="1.2" height="1.2"/><rect x="105" y="455" width="1.2" height="1.2"/><rect x="137" y="442" width="1.2" height="1.2"/><rect x="409" y="382" width="1.2" height="1.2"/><rect x="275" y="448" width="1.2" height="1.2"/><rect x="365" y="403" width="1.2" height="1.2"/><rect x="365" y="377" width="1.2" height="1.2"/><rect x="328" y="374" width="1.2" height="1.2"/><rect x="258" y="426" width="1.2" height="1.2"/><rect x="136" y="457" width="1.2" height="1.2"/><rect x="539" y="361" width="1.2" height="1.2"/><rect x="158" y="425" width="1.2" height="1.2"/><rect x="234" y="466" width="1.2" height="1.2"/><rect x="101" y="435" width="1.2" height="1.2"/><rect x="414" y="326" width="1.2" height="1.2"/><rect x="123" y="465" width="1.2" height="1.2"/><rect x="145" y="428" width="1.2" height="1.2"/><rect x="337" y="422" width="1.2" height="1.2"/><rect x="151" y="457" width="1.2" height="1.2"/><rect x="189" y="458" width="1.2" height="1.2"/><rect x="154" y="443" width="1.2" height="1.2"/><rect x="412" y="358" width="1.2" height="1.2"/><rect x="298" y="404" width="1.2" height="1.2"/><rect x="145" y="432" width="1.2" height="1.2"/><rect x="349" y="387" width="1.2" height="1.2"/><rect x="309" y="437" width="1.2" height="1.2"/><rect x="426" y="413" width="1.2" height="1.2"/><rect x="299" y="410" width="1.2" height="1.2"/><rect x="63" y="476" width="1.2" height="1.2"/><rect x="177" y="434" width="1.2" height="1.2"/><rect x="150" y="460" width="1.2" height="1.2"/><rect x="313" y="434" width="1.2" height="1.2"/><rect x="75" y="496" width="1.2" height="1.2"/><rect x="192" y="424" width="1.2" height="1.2"/><rect x="338" y="437" width="1.2" height="1.2"/><rect x="246" y="422" width="1.2" height="1.2"/><rect x="250" y="403" width="1.2" height="1.2"/><rect x="172" y="482" width="1.2" height="1.2"/><rect x="474" y="404" width="1.2" height="1.2"/><rect x="263" y="395" width="1.2" height="1.2"/><rect x="268" y="420" width="1.2" height="1.2"/><rect x="70" y="499" width="1.2" height="1.2"/><rect x="323" y="374" width="1.2" height="1.2"/><rect x="312" y="381" width="1.2" height="1.2"/><rect x="205" y="459" width="1.2" height="1.2"/><rect x="308" y="408" width="1.2" height="1.2"/><rect x="127" y="447" width="1.2" height="1.2"/><rect x="196" y="454" width="1.2" height="1.2"/><rect x="376" y="381" width="1.2" height="1.2"/><rect x="325" y="379" width="1.2" height="1.2"/><rect x="173" y="434" width="1.2" height="1.2"/><rect x="344" y="400" width="1.2" height="1.2"/><rect x="330" y="414" width="1.2" height="1.2"/><rect x="437" y="380" width="1.2" height="1.2"/><rect x="84" y="482" width="1.2" height="1.2"/><rect x="165" y="416" width="1.2" height="1.2"/><rect x="220" y="438" width="1.2" height="1.2"/><rect x="310" y="431" width="1.2" height="1.2"/><rect x="289" y="452" width="1.2" height="1.2"/><rect x="116" y="483" width="1.2" height="1.2"/><rect x="300" y="397" width="1.2" height="1.2"/><rect x="355" y="387" width="1.2" height="1.2"/><rect x="412" y="371" width="1.2" height="1.2"/><rect x="213" y="428" width="1.2" height="1.2"/><rect x="274" y="398" width="1.2" height="1.2"/><rect x="342" y="376" width="1.2" height="1.2"/><rect x="265" y="395" width="1.2" height="1.2"/><rect x="300" y="410" width="1.2" height="1.2"/><rect x="310" y="401" width="1.2" height="1.2"/><rect x="228" y="427" width="1.2" height="1.2"/><rect x="102" y="482" width="1.2" height="1.2"/><rect x="295" y="460" width="1.2" height="1.2"/><rect x="224" y="392" width="1.2" height="1.2"/><rect x="211" y="430" width="1.2" height="1.2"/><rect x="108" y="502" width="1.2" height="1.2"/><rect x="262" y="417" width="1.2" height="1.2"/><rect x="146" y="463" width="1.2" height="1.2"/><rect x="229" y="378" width="1.2" height="1.2"/><rect x="257" y="401" width="1.2" height="1.2"/><rect x="204" y="448" width="1.2" height="1.2"/><rect x="151" y="431" width="1.2" height="1.2"/><rect x="257" y="410" width="1.2" height="1.2"/><rect x="103" y="505" width="1.2" height="1.2"/><rect x="84" y="472" width="1.2" height="1.2"/><rect x="409" y="344" width="1.2" height="1.2"/><rect x="226" y="422" width="1.2" height="1.2"/><rect x="272" y="412" width="1.2" height="1.2"/><rect x="204" y="431" width="1.2" height="1.2"/><rect x="247" y="429" width="1.2" height="1.2"/><rect x="294" y="383" width="1.2" height="1.2"/><rect x="146" y="439" width="1.2" height="1.2"/><rect x="318" y="358" width="1.2" height="1.2"/><rect x="175" y="411" width="1.2" height="1.2"/><rect x="383" y="373" width="1.2" height="1.2"/><rect x="187" y="453" width="1.2" height="1.2"/><rect x="453" y="365" width="1.2" height="1.2"/><rect x="166" y="446" width="1.2" height="1.2"/><rect x="236" y="393" width="1.2" height="1.2"/><rect x="487" y="358" width="1.2" height="1.2"/><rect x="187" y="450" width="1.2" height="1.2"/><rect x="207" y="431" width="1.2" height="1.2"/><rect x="213" y="424" width="1.2" height="1.2"/><rect x="302" y="381" width="1.2" height="1.2"/><rect x="116" y="482" width="1.2" height="1.2"/><rect x="481" y="339" width="1.2" height="1.2"/><rect x="383" y="401" width="1.2" height="1.2"/><rect x="176" y="435" width="1.2" height="1.2"/><rect x="110" y="490" width="1.2" height="1.2"/><rect x="73" y="476" width="1.2" height="1.2"/><rect x="242" y="412" width="1.2" height="1.2"/><rect x="409" y="376" width="1.2" height="1.2"/><rect x="53" y="498" width="1.2" height="1.2"/><rect x="74" y="457" width="1.2" height="1.2"/><rect x="174" y="418" width="1.2" height="1.2"/><rect x="96" y="506" width="1.2" height="1.2"/><rect x="193" y="429" width="1.2" height="1.2"/><rect x="365" y="395" width="1.2" height="1.2"/><rect x="307" y="394" width="1.2" height="1.2"/><rect x="183" y="454" width="1.2" height="1.2"/><rect x="323" y="388" width="1.2" height="1.2"/><rect x="153" y="469" width="1.2" height="1.2"/><rect x="171" y="441" width="1.2" height="1.2"/><rect x="202" y="428" width="1.2" height="1.2"/><rect x="431" y="377" width="1.2" height="1.2"/><rect x="282" y="371" width="1.2" height="1.2"/><rect x="197" y="403" width="1.2" height="1.2"/><rect x="151" y="426" width="1.2" height="1.2"/><rect x="286" y="362" width="1.2" height="1.2"/><rect x="95" y="486" width="1.2" height="1.2"/><rect x="107" y="460" width="1.2" height="1.2"/><rect x="57" y="525" width="1.2" height="1.2"/><rect x="178" y="434" width="1.2" height="1.2"/><rect x="145" y="494" width="1.2" height="1.2"/><rect x="137" y="479" width="1.2" height="1.2"/><rect x="215" y="409" width="1.2" height="1.2"/><rect x="236" y="426" width="1.2" height="1.2"/><rect x="74" y="527" width="1.2" height="1.2"/><rect x="301" y="388" width="1.2" height="1.2"/><rect x="395" y="382" width="1.2" height="1.2"/><rect x="73" y="486" width="1.2" height="1.2"/><rect x="194" y="429" width="1.2" height="1.2"/><rect x="221" y="459" width="1.2" height="1.2"/><rect x="200" y="418" width="1.2" height="1.2"/><rect x="150" y="473" width="1.2" height="1.2"/><rect x="83" y="471" width="1.2" height="1.2"/><rect x="292" y="420" width="1.2" height="1.2"/><rect x="67" y="500" width="1.2" height="1.2"/><rect x="95" y="480" width="1.2" height="1.2"/><rect x="316" y="365" width="1.2" height="1.2"/><rect x="109" y="454" width="1.2" height="1.2"/><rect x="178" y="418" width="1.2" height="1.2"/><rect x="338" y="406" width="1.2" height="1.2"/><rect x="93" y="495" width="1.2" height="1.2"/><rect x="327" y="358" width="1.2" height="1.2"/><rect x="104" y="481" width="1.2" height="1.2"/><rect x="333" y="389" width="1.2" height="1.2"/><rect x="171" y="438" width="1.2" height="1.2"/><rect x="202" y="458" width="1.2" height="1.2"/><rect x="136" y="477" width="1.2" height="1.2"/><rect x="463" y="394" width="1.2" height="1.2"/><rect x="412" y="335" width="1.2" height="1.2"/><rect x="326" y="432" width="1.2" height="1.2"/><rect x="180" y="463" width="1.2" height="1.2"/><rect x="109" y="470" width="1.2" height="1.2"/><rect x="328" y="386" width="1.2" height="1.2"/><rect x="125" y="479" width="1.2" height="1.2"/><rect x="60" y="527" width="1.2" height="1.2"/><rect x="451" y="386" width="1.2" height="1.2"/><rect x="248" y="431" width="1.2" height="1.2"/><rect x="91" y="505" width="1.2" height="1.2"/><rect x="75" y="499" width="1.2" height="1.2"/><rect x="246" y="415" width="1.2" height="1.2"/><rect x="63" y="467" width="1.2" height="1.2"/><rect x="125" y="451" width="1.2" height="1.2"/><rect x="183" y="485" width="1.2" height="1.2"/><rect x="546" y="371" width="1.2" height="1.2"/><rect x="233" y="461" width="1.2" height="1.2"/><rect x="204" y="432" width="1.2" height="1.2"/><rect x="369" y="378" width="1.2" height="1.2"/><rect x="83" y="511" width="1.2" height="1.2"/><rect x="236" y="396" width="1.2" height="1.2"/><rect x="57" y="509" width="1.2" height="1.2"/><rect x="336" y="363" width="1.2" height="1.2"/><rect x="206" y="474" width="1.2" height="1.2"/><rect x="222" y="383" width="1.2" height="1.2"/><rect x="142" y="442" width="1.2" height="1.2"/><rect x="485" y="396" width="1.2" height="1.2"/><rect x="190" y="410" width="1.2" height="1.2"/><rect x="403" y="367" width="1.2" height="1.2"/><rect x="151" y="462" width="1.2" height="1.2"/><rect x="92" y="467" width="1.2" height="1.2"/><rect x="121" y="499" width="1.2" height="1.2"/><rect x="158" y="464" width="1.2" height="1.2"/><rect x="254" y="391" width="1.2" height="1.2"/><rect x="76" y="500" width="1.2" height="1.2"/><rect x="181" y="465" width="1.2" height="1.2"/><rect x="544" y="367" width="1.2" height="1.2"/><rect x="217" y="423" width="1.2" height="1.2"/><rect x="98" y="484" width="1.2" height="1.2"/><rect x="329" y="381" width="1.2" height="1.2"/><rect x="421" y="396" width="1.2" height="1.2"/><rect x="278" y="457" width="1.2" height="1.2"/><rect x="119" y="480" width="1.2" height="1.2"/><rect x="429" y="328" width="1.2" height="1.2"/><rect x="302" y="422" width="1.2" height="1.2"/><rect x="127" y="499" width="1.2" height="1.2"/><rect x="134" y="434" width="1.2" height="1.2"/><rect x="369" y="383" width="1.2" height="1.2"/><rect x="214" y="418" width="1.2" height="1.2"/><rect x="374" y="342" width="1.2" height="1.2"/><rect x="333" y="445" width="1.2" height="1.2"/><rect x="365" y="373" width="1.2" height="1.2"/><rect x="168" y="461" width="1.2" height="1.2"/><rect x="201" y="419" width="1.2" height="1.2"/><rect x="186" y="419" width="1.2" height="1.2"/><rect x="218" y="393" width="1.2" height="1.2"/><rect x="278" y="382" width="1.2" height="1.2"/><rect x="144" y="436" width="1.2" height="1.2"/><rect x="65" y="462" width="1.2" height="1.2"/><rect x="419" y="360" width="1.2" height="1.2"/><rect x="222" y="464" width="1.2" height="1.2"/><rect x="540" y="369" width="1.2" height="1.2"/><rect x="72" y="479" width="1.2" height="1.2"/><rect x="63" y="508" width="1.2" height="1.2"/><rect x="295" y="400" width="1.2" height="1.2"/><rect x="127" y="425" width="1.2" height="1.2"/><rect x="229" y="409" width="1.2" height="1.2"/><rect x="160" y="471" width="1.2" height="1.2"/><rect x="189" y="396" width="1.2" height="1.2"/><rect x="306" y="390" width="1.2" height="1.2"/><rect x="58" y="516" width="1.2" height="1.2"/><rect x="326" y="440" width="1.2" height="1.2"/><rect x="211" y="417" width="1.2" height="1.2"/><rect x="245" y="420" width="1.2" height="1.2"/><rect x="180" y="416" width="1.2" height="1.2"/><rect x="111" y="508" width="1.2" height="1.2"/><rect x="78" y="503" width="1.2" height="1.2"/><rect x="210" y="459" width="1.2" height="1.2"/><rect x="307" y="376" width="1.2" height="1.2"/><rect x="241" y="428" width="1.2" height="1.2"/><rect x="390" y="385" width="1.2" height="1.2"/><rect x="164" y="466" width="1.2" height="1.2"/><rect x="290" y="433" width="1.2" height="1.2"/><rect x="313" y="375" width="1.2" height="1.2"/><rect x="139" y="469" width="1.2" height="1.2"/><rect x="484" y="388" width="1.2" height="1.2"/><rect x="114" y="443" width="1.2" height="1.2"/><rect x="278" y="448" width="1.2" height="1.2"/><rect x="276" y="439" width="1.2" height="1.2"/><rect x="127" y="449" width="1.2" height="1.2"/><rect x="237" y="382" width="1.2" height="1.2"/><rect x="337" y="396" width="1.2" height="1.2"/><rect x="214" y="386" width="1.2" height="1.2"/><rect x="153" y="463" width="1.2" height="1.2"/><rect x="238" y="426" width="1.2" height="1.2"/><rect x="200" y="464" width="1.2" height="1.2"/><rect x="228" y="467" width="1.2" height="1.2"/><rect x="148" y="441" width="1.2" height="1.2"/><rect x="384" y="389" width="1.2" height="1.2"/><rect x="314" y="430" width="1.2" height="1.2"/><rect x="66" y="502" width="1.2" height="1.2"/><rect x="288" y="409" width="1.2" height="1.2"/><rect x="73" y="523" width="1.2" height="1.2"/><rect x="436" y="360" width="1.2" height="1.2"/><rect x="104" y="481" width="1.2" height="1.2"/><rect x="80" y="490" width="1.2" height="1.2"/><rect x="80" y="518" width="1.2" height="1.2"/><rect x="125" y="415" width="1.2" height="1.2"/><rect x="183" y="461" width="1.2" height="1.2"/><rect x="307" y="413" width="1.2" height="1.2"/><rect x="181" y="438" width="1.2" height="1.2"/><rect x="284" y="396" width="1.2" height="1.2"/><rect x="78" y="485" width="1.2" height="1.2"/><rect x="334" y="402" width="1.2" height="1.2"/><rect x="347" y="388" width="1.2" height="1.2"/><rect x="489" y="337" width="1.2" height="1.2"/><rect x="482" y="321" width="1.2" height="1.2"/><rect x="200" y="399" width="1.2" height="1.2"/><rect x="103" y="517" width="1.2" height="1.2"/><rect x="259" y="447" width="1.2" height="1.2"/><rect x="130" y="416" width="1.2" height="1.2"/><rect x="169" y="434" width="1.2" height="1.2"/><rect x="248" y="412" width="1.2" height="1.2"/><rect x="324" y="424" width="1.2" height="1.2"/><rect x="267" y="412" width="1.2" height="1.2"/><rect x="198" y="434" width="1.2" height="1.2"/><rect x="515" y="387" width="1.2" height="1.2"/><rect x="97" y="513" width="1.2" height="1.2"/><rect x="166" y="474" width="1.2" height="1.2"/><rect x="224" y="380" width="1.2" height="1.2"/><rect x="219" y="423" width="1.2" height="1.2"/><rect x="88" y="501" width="1.2" height="1.2"/><rect x="349" y="373" width="1.2" height="1.2"/><rect x="374" y="371" width="1.2" height="1.2"/><rect x="239" y="427" width="1.2" height="1.2"/><rect x="218" y="425" width="1.2" height="1.2"/><rect x="127" y="425" width="1.2" height="1.2"/><rect x="300" y="387" width="1.2" height="1.2"/><rect x="319" y="380" width="1.2" height="1.2"/><rect x="154" y="469" width="1.2" height="1.2"/><rect x="496" y="350" width="1.2" height="1.2"/><rect x="395" y="346" width="1.2" height="1.2"/><rect x="184" y="431" width="1.2" height="1.2"/><rect x="496" y="324" width="1.2" height="1.2"/><rect x="406" y="404" width="1.2" height="1.2"/><rect x="73" y="527" width="1.2" height="1.2"/><rect x="223" y="468" width="1.2" height="1.2"/><rect x="58" y="490" width="1.2" height="1.2"/><rect x="175" y="412" width="1.2" height="1.2"/><rect x="224" y="403" width="1.2" height="1.2"/><rect x="300" y="433" width="1.2" height="1.2"/><rect x="369" y="422" width="1.2" height="1.2"/><rect x="444" y="347" width="1.2" height="1.2"/><rect x="134" y="480" width="1.2" height="1.2"/><rect x="120" y="502" width="1.2" height="1.2"/><rect x="269" y="452" width="1.2" height="1.2"/><rect x="202" y="477" width="1.2" height="1.2"/><rect x="111" y="447" width="1.2" height="1.2"/><rect x="151" y="471" width="1.2" height="1.2"/><rect x="248" y="438" width="1.2" height="1.2"/><rect x="255" y="452" width="1.2" height="1.2"/><rect x="222" y="455" width="1.2" height="1.2"/><rect x="55" y="512" width="1.2" height="1.2"/><rect x="261" y="399" width="1.2" height="1.2"/><rect x="159" y="461" width="1.2" height="1.2"/><rect x="198" y="441" width="1.2" height="1.2"/><rect x="113" y="469" width="1.2" height="1.2"/><rect x="188" y="444" width="1.2" height="1.2"/><rect x="249" y="420" width="1.2" height="1.2"/><rect x="315" y="424" width="1.2" height="1.2"/><rect x="228" y="461" width="1.2" height="1.2"/><rect x="308" y="446" width="1.2" height="1.2"/><rect x="384" y="377" width="1.2" height="1.2"/><rect x="240" y="462" width="1.2" height="1.2"/><rect x="301" y="359" width="1.2" height="1.2"/><rect x="330" y="440" width="1.2" height="1.2"/><rect x="70" y="539" width="1.2" height="1.2"/><rect x="125" y="420" width="1.2" height="1.2"/><rect x="248" y="397" width="1.2" height="1.2"/><rect x="324" y="416" width="1.2" height="1.2"/><rect x="242" y="440" width="1.2" height="1.2"/><rect x="191" y="469" width="1.2" height="1.2"/><rect x="123" y="432" width="1.2" height="1.2"/><rect x="420" y="339" width="1.2" height="1.2"/><rect x="243" y="389" width="1.2" height="1.2"/><rect x="207" y="418" width="1.2" height="1.2"/><rect x="107" y="489" width="1.2" height="1.2"/><rect x="186" y="435" width="1.2" height="1.2"/><rect x="129" y="465" width="1.2" height="1.2"/><rect x="190" y="441" width="1.2" height="1.2"/><rect x="196" y="426" width="1.2" height="1.2"/><rect x="229" y="389" width="1.2" height="1.2"/><rect x="326" y="390" width="1.2" height="1.2"/><rect x="454" y="391" width="1.2" height="1.2"/><rect x="223" y="410" width="1.2" height="1.2"/><rect x="145" y="456" width="1.2" height="1.2"/><rect x="119" y="461" width="1.2" height="1.2"/><rect x="340" y="372" width="1.2" height="1.2"/><rect x="302" y="431" width="1.2" height="1.2"/><rect x="490" y="374" width="1.2" height="1.2"/><rect x="357" y="412" width="1.2" height="1.2"/><rect x="189" y="427" width="1.2" height="1.2"/><rect x="232" y="432" width="1.2" height="1.2"/><rect x="55" y="486" width="1.2" height="1.2"/><rect x="275" y="365" width="1.2" height="1.2"/><rect x="464" y="357" width="1.2" height="1.2"/><rect x="218" y="427" width="1.2" height="1.2"/><rect x="320" y="351" width="1.2" height="1.2"/><rect x="304" y="424" width="1.2" height="1.2"/><rect x="344" y="404" width="1.2" height="1.2"/><rect x="165" y="476" width="1.2" height="1.2"/><rect x="543" y="301" width="1.2" height="1.2"/><rect x="279" y="407" width="1.2" height="1.2"/><rect x="223" y="399" width="1.2" height="1.2"/><rect x="468" y="252" width="1.2" height="1.2"/><rect x="60" y="382" width="1.2" height="1.2"/><rect x="521" y="290" width="1.2" height="1.2"/><rect x="503" y="296" width="1.2" height="1.2"/><rect x="530" y="318" width="1.2" height="1.2"/></g>
 <polyline points="53.2,306.8 53.9,289.0 54.6,271.0 55.7,256.8 57.1,250.5 59.8,248.8 62.1,240.4 64.6,245.7 67.0,247.3 70.5,247.3 72.3,244.3 77.1,244.3 79.5,246.4 82.1,247.9 85.4,251.0 87.5,247.3 90.2,252.3 92.5,247.5 95.7,251.4 102.7,251.4 105.7,255.4 108.0,255.0 110.7,253.2 117.0,253.2 118.8,257.7 122.3,265.2 125.9,262.1 129.5,263.0 132.1,267.9 135.4,262.3 145.5,262.3 147.9,267.1 150.9,267.1 152.7,266.3 155.4,267.1 157.1,266.3 160.7,270.5 170.5,270.5 172.9,274.3 175.0,273.4 177.7,274.3 188.4,274.3 189.6,273.2 192.0,273.2 192.9,274.1 195.0,273.0 197.3,276.4 207.5,276.4 210.4,280.4 218.4,280.4 222.3,283.2 229.5,283.2 232.5,286.4 242.3,286.4 244.6,290.4 252.7,290.4 254.8,293.2 262.5,293.2 264.6,295.4 269.6,295.4 272.7,298.4 279.5,298.4 282.5,301.4 289.3,301.4 292.3,303.2 299.5,303.2 302.1,306.4 317.5,306.4 319.6,308.4 325.9,308.4 328.9,311.4 334.5,311.4 338.8,315.4 344.1,315.4 346.8,317.3 352.1,317.3 354.5,320.4 362.5,320.4 364.6,323.4 369.6,323.4 372.3,326.4 377.7,326.4 379.8,329.3 387.0,329.3 389.6,332.3 394.6,332.3 396.8,335.4 400.9,335.4 404.5,341.4 409.5,341.4 411.6,343.2 414.3,343.2 417.0,346.3 421.4,346.3 425.0,349.3 428.9,351.6 434.8,351.6 436.6,352.5 442.0,352.5 450.0,358.4 452.7,358.4 456.8,363.2 458.9,363.2 461.6,366.4 464.3,366.4 467.0,369.5 471.4,369.5 475.0,372.5 477.7,372.5 479.5,374.3 482.1,374.3 484.8,378.4 489.3,378.4 491.4,382.3 494.6,382.3 497.3,384.3 499.1,384.6 500.9,388.2 504.5,388.2 507.1,391.8 509.3,391.8 511.6,395.4 514.3,395.4 517.0,398.4 520.5,398.4 522.3,399.3 524.1,399.3 526.8,403.4 529.5,403.4 532.1,407.0 534.3,407.0 537.1,412.3 539.3,412.3 541.4,416.3 544.3,416.3 546.8,418.2 549.1,418.2" fill="none" stroke="#14aeee" stroke-width="1.150" stroke-linejoin="round"/>
</svg>
<div class="ax" style="left:53px;top:159px" id="mbs">MB/s</div>
<div class="ax" style="left:534px;top:159px" id="ms">ms</div>
<div class="ax" style="left:20px;width:27px;text-align:right;top:166px">200</div>
<div class="ax" style="left:20px;width:27px;text-align:right;top:272px">150</div>
<div class="ax" style="left:20px;width:27px;text-align:right;top:379px">100</div>
<div class="ax" style="left:20px;width:27px;text-align:right;top:485px">50</div>
<div class="ax" style="left:554px;top:166px">40</div>
<div class="ax" style="left:554px;top:272px">30</div>
<div class="ax" style="left:554px;top:379px">20</div>
<div class="ax" style="left:554px;top:485px">10</div>

<!-- right panel -->
<div class="btn" style="left:594px;top:151px;width:86px;height:28px"></div>
<div class="t" style="left:625px;top:158px" id="start">开始</div>
<div class="sep" style="top:192px"></div>
<div class="a" style="left:590px;top:203px;width:13px;height:13px;box-sizing:border-box;border:1px solid #333;border-radius:50%;background:#fff"></div>
<div class="a" style="left:593.500px;top:206.500px;width:6px;height:6px;border-radius:50%;background:#333"></div>
<div class="t" style="left:606px;top:203px">读取</div>
<div class="a" style="left:590px;top:224px;width:13px;height:13px;box-sizing:border-box;border:1px solid #333;border-radius:50%;background:#fff"></div>
<div class="t" style="left:606px;top:224px">写入</div>
<div class="sep" style="top:243px"></div>
<div class="cb" style="top:256px"></div>
<div class="t" style="left:606px;top:256px">快捷行程</div>
<div class="a" style="left:590px;top:279px;width:72px;height:26px;box-sizing:border-box;border:1px solid #c8c8c8;background:#fff"></div>
<div class="a" style="left:644px;top:280px;width:17px;height:24px;background:#f0f0f0;box-sizing:border-box;border:1px solid #c0c0c0"></div>
<div class="a" style="left:645px;top:281px;width:15px;height:11px;background:#f0f0f0;box-sizing:border-box;border:1px solid #dadada"></div>
<div class="a" style="left:645px;top:292px;width:15px;height:11px;background:#f0f0f0;box-sizing:border-box;border:1px solid #dadada"></div>
<svg class="a" style="left:648px;top:283px" width="10" height="18" viewBox="0 0 10 18"><path d="M1.500 5.500l3-3 3 3z M1.500 12l3 3 3-3z" fill="#606060"/></svg>
<div class="t" style="left:594px;top:283px;color:#8a8a8a;font-size:12.500px">40</div>
<div class="t" style="left:676px;top:285px;font-size:13px" id="gb">gB</div>
<div class="cb" style="top:320px"></div>
<svg class="a" style="left:590px;top:320px" width="13" height="13"><path d="M2.500 6.500l3 3 5.500-6" fill="none" stroke="#222" stroke-width="1.100"/></svg>
<div class="t" style="left:606px;top:320px">传输速率</div>
<div class="sep" style="top:337px"></div>
<div class="t" style="left:590px;top:343px">最低</div>
<div class="bx" style="top:360px;color:#18b0f0">84.5 MB/s</div>
<div class="t" style="left:590px;top:386px">最高</div>
<div class="bx" style="top:403px;color:#18b0f0">167.7 MB/s</div>
<div class="t" style="left:590px;top:426px">平均</div>
<div class="bx" style="top:443px;color:#18b0f0">133.9 MB/s</div>
<div class="sep" style="top:473px"></div>
<div class="cb" style="top:483px"></div>
<svg class="a" style="left:590px;top:483px" width="13" height="13"><path d="M2.500 6.500l3 3 5.500-6" fill="none" stroke="#222" stroke-width="1.100"/></svg>
<div class="t" style="left:606px;top:483px">存取时间</div>
<div class="bx" style="top:500px;color:#f4f400">15.5 ms</div>
<div class="cb" style="top:528px"></div>
<svg class="a" style="left:590px;top:528px" width="13" height="13"><path d="M2.500 6.500l3 3 5.500-6" fill="none" stroke="#222" stroke-width="1.100"/></svg>
<div class="t" style="left:606px;top:528px">突发传输速率</div>
<div class="bx" style="top:545px;color:#fff">217.8 MB/s</div>
<div class="a" style="left:590px;top:570px;width:110px;height:6px;overflow:hidden"><div class="cb" style="left:0;top:3px"></div><div class="t" style="left:16px;top:2px">CPU 占用率</div></div>

<!-- watermark -->
<svg class="a" style="left:90px;top:540px" width="560" height="56" viewBox="90 540 560 56">
 <g font-family="Liberation Sans, sans-serif" font-weight="bold" font-size="56" fill="#0000fe" stroke="#0000fe" stroke-width="3.2" stroke-linejoin="miter" stroke-miterlimit="3"><text stroke-width="7" transform="translate(100.92 587.87) scale(0.9808 0.8086)">w</text><text stroke-width="7" transform="translate(157.55 587.87) scale(0.9885 0.8086)">w</text><text stroke-width="7" transform="translate(215.04 587.87) scale(1.0096 0.8086)">w</text><text stroke-width="2" transform="translate(264.40 589.96) scale(1.2000 1.0400)">.</text><text stroke-width="5" transform="translate(284.44 588.37) scale(1.0394 0.9773)">3</text><text stroke-width="3" transform="translate(322.10 589.00) scale(0.4483 1.0000)">1</text><text stroke-width="5" transform="translate(340.71 588.35) scale(1.0091 0.9837)">5</text><text stroke-width="4.5" transform="translate(374.95 588.74) scale(1.0242 0.9318)">k</text><text stroke-width="4.5" transform="translate(412.28 588.74) scale(1.0576 0.9318)">k</text><text stroke-width="4.5" transform="translate(449.84 588.74) scale(1.0818 0.9318)">k</text><text stroke-width="2" transform="translate(488.70 589.96) scale(1.1000 1.0400)">.</text><text stroke-width="5" transform="translate(507.50 589.26) scale(1.0156 0.9143)">c</text><text stroke-width="5" transform="translate(541.80 589.26) scale(1.0500 0.9143)">o</text><text stroke-width="5.5" transform="translate(580.54 588.02) scale(1.0604 0.8600)">m</text><rect x="321.8" y="549" width="15.2" height="41.6" stroke="none"/></g>
</svg>
</body></html>
